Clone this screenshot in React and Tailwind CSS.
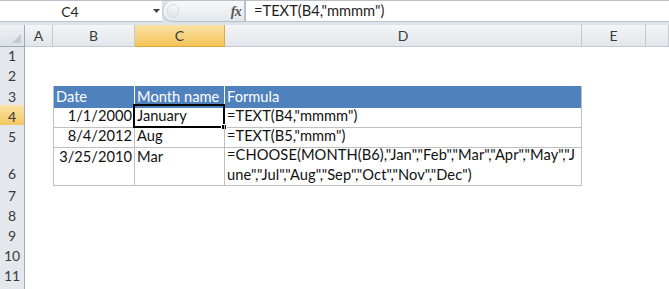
import React from 'react';

const cols = ['A', 'B', 'C', 'D', 'E', ''];
const gridCols = 'grid grid-cols-[25px_28px_82px_90px_357px_64px_1fr]';

const rows = [
    { n: 1, h: 'h-[20px]' },
    { n: 2, h: 'h-[20px]' },
    { n: 3, h: 'h-[20px]', cells: { B: 'Date', C: 'Month name', D: 'Formula' }, head: true },
    { n: 4, h: 'h-[20px]', cells: { B: '1/1/2000', C: 'January', D: '=TEXT(B4,"mmmm")' }, selected: true },
    { n: 5, h: 'h-[20px]', cells: { B: '8/4/2012', C: 'Aug', D: '=TEXT(B5,"mmm")' } },
    { n: 6, h: 'h-[40px]', cells: { B: '3/25/2010', C: 'Mar', D: '=CHOOSE(MONTH(B6),"Jan","Feb","Mar","Apr","May","June","Jul","Aug","Sep","Oct","Nov","Dec")' }, tall: true },
    { n: 7, h: 'h-[20px]' },
    { n: 8, h: 'h-[20px]' },
    { n: 9, h: 'h-[20px]' },
    { n: 10, h: 'h-[20px]' },
    { n: 11, h: 'h-[20px]' },
    { n: '', h: 'h-[20px]' },
];

const font = { fontFamily: 'Lato, "Liberation Sans", sans-serif' };

const FormulaBar = () => (
    <div className="h-[25px] bg-[#dde3ea] border-t border-[#b9c0c9] flex items-start">
        <div className="h-[21px] w-[150px] bg-white border-b border-[#b9c0c9] flex items-center justify-center text-[14px] text-[#1e1e1e]">
            <span className="ml-[-10px]">C4</span>
        </div>
        <div className="h-[21px] w-[12px] bg-white border-b border-[#b9c0c9] flex items-center justify-center">
            <svg width="7" height="4" viewBox="0 0 7 4"><path d="M0 0h7L3.5 4z" fill="#444" /></svg>
        </div>
        <div className="h-[21px] w-[83px] bg-gradient-to-b from-[#f7f8fa] to-[#e4e8ed] border border-[#b9c0c9] border-t-0 rounded-l-[11px] flex items-center justify-between pl-[4px] pr-[3px]">
            <div className="w-[12px] h-[14px] rounded-full bg-gradient-to-b from-[#f6f7f9] to-[#e0e3e7] border border-[#d8dce1]" />
            <span className="text-[14px] italic font-bold text-[#555] tracking-tighter" style={{ fontFamily: '"Liberation Serif", serif' }}>fx</span>
        </div>
        <div className="h-[21px] flex-1 bg-white border-b border-l border-[#b9c0c9] flex items-center pl-[8px] text-[14.67px] text-[#1e1e1e]">
            =TEXT(B4,"mmmm")
        </div>
    </div>
);

const HeaderRow = () => (
    <div className={`${gridCols} h-[20px]`}>
        <div className="bg-gradient-to-b from-[#eef0f3] to-[#dde1e6] border-r border-b border-[#9eaabb] relative">
            <svg className="absolute right-[3px] bottom-[3px]" width="9" height="9" viewBox="0 0 9 9"><path d="M9 0v9H0z" fill="#c4c9d0" /></svg>
        </div>
        {cols.map((c, i) =>
            c === 'C' ? (
                <div key={i} className="bg-gradient-to-b from-[#fbe3a6] to-[#f3c356] border-r border-b border-[#e0a93a] flex items-center justify-center text-[14px] text-[#3a3a3a]">{c}</div>
            ) : (
                <div key={i} className="bg-gradient-to-b from-[#f3f5f7] to-[#e2e6ea] border-r border-b border-[#c3c9d1] flex items-center justify-center text-[14px] text-[#3a3a3a]">{c}</div>
            )
        )}
    </div>
);

const Row = ({ r }) => {
    const c = r.cells;
    const labelCls = r.selected
        ? 'bg-gradient-to-b from-[#fbe3a6] to-[#f3c356] border-b border-[#e0a93a]'
        : 'bg-[#e4e8ed] border-b border-[#c3c9d1]';
    const headBase = 'bg-[#4f81bd] text-white border-r border-white px-[2px] flex items-center text-[14.67px]';
    const dataBase = 'border-r border-b border-[#c0c0c0] px-[2px] text-[14.67px] text-[#111]';
    return (
        <div className={`${gridCols} ${r.h}`}>
            <div className={`${labelCls} border-r border-r-[#9eaabb] flex justify-center text-[14px] text-[#3a3a3a] ${r.tall ? 'items-end pb-[1px]' : 'items-center'}`}>
                {r.n}
            </div>
            <div />
            {!c ? (
                <>
                    <div />
                    <div />
                    <div />
                </>
            ) : r.head ? (
                <>
                    <div className={`${headBase} border-l border-l-[#c0c0c0] mt-[1px]`}>{c.B}</div>
                    <div className={`${headBase} mt-[1px]`}>{c.C}</div>
                    <div className={`${headBase} border-r-[#c0c0c0] mt-[1px]`}>{c.D}</div>
                </>
            ) : (
                <>
                    <div className={`${dataBase} border-l flex justify-end ${r.tall ? 'items-start pt-[1px]' : 'items-center'}`}>{c.B}</div>
                    <div className={`${dataBase} flex relative ${r.tall ? 'items-start pt-[1px]' : 'items-center'}`}>
                        {c.C}
                        {r.selected && (
                            <div className="absolute left-[-2px] top-[-1px] right-[-1px] bottom-[-1px] border-2 border-black">
                                <div className="absolute right-[-4px] bottom-[-4px] w-[6px] h-[6px] bg-black border border-white" />
                            </div>
                        )}
                    </div>
                    <div className={`${dataBase} text-[#2a2a2a] ${r.tall ? 'leading-[20px] break-all tracking-[0.08px]' : 'flex items-center'}`}>{c.D}</div>
                </>
            )}
            <div />
            <div />
        </div>
    );
};

const App = () => {
    return (
        <div className="w-[669px] h-[289px] overflow-hidden bg-white" style={font}>
            <FormulaBar />
            <HeaderRow />
            {rows.map((r, i) => (
                <Row key={i} r={r} />
            ))}
        </div>
    );
};

export default App;
